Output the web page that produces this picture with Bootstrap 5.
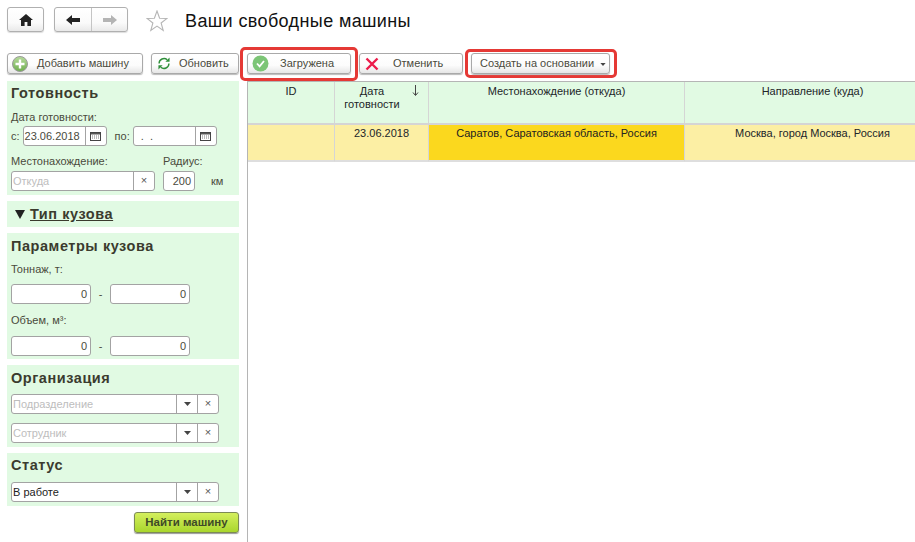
<!DOCTYPE html>
<html lang="ru"><head><meta charset="utf-8"><title>Ваши свободные машины</title>
<link href="https://cdn.jsdelivr.net/npm/bootstrap@5.3.0/dist/css/bootstrap.min.css" rel="stylesheet">
<style>
html,body{height:542px;overflow:hidden;background:#fff}
body{font-family:"Liberation Sans",Arial,sans-serif;font-size:11px;line-height:13px;color:#4a4a3c}
.top{height:46px;padding:7px 0 0 7px}
.nav-b{height:25px;border:1px solid #b0b0b0;border-radius:3px;background:linear-gradient(#fff,#fafafa 65%,#e9e9e9);box-shadow:0 1px 1px #ddd}
.home{width:37px}
.hist{width:74px;margin-left:10px}
.hist>div{width:50%}
.hist>div+div{border-left:1px solid #c4c4c4}
.star{margin-left:18px;margin-top:3px}
h1.ttl{font-size:18px;line-height:22px;font-weight:400;color:#111;margin:3px 0 0 17px;letter-spacing:.38px}
.tb{height:35px;padding-left:7px;align-items:center}
.b1c{height:21px;border:1px solid #a9a9a9;border-radius:3px;background:linear-gradient(#fff,#fcfcfc 60%,#e6e6e6);box-shadow:0 1px 1px #bbb;color:#4a4a3c;white-space:nowrap}
.redbox{border:3px solid #e53935;border-radius:5px;display:flex}
.rb1{margin-left:1px;padding:3.5px 4px}
.rb2{margin-left:2px;padding:1px 4px 1px 3px}
.main{height:461px}
.side{width:232px;margin-left:7px}
.pn{background:#e1fae3;padding:4px 4px 0 4px;margin-bottom:6px}
.pn h6{font-size:14.5px;line-height:16px;font-weight:700;color:#3b3b2e;margin:0;letter-spacing:.55px}
.fld{height:20px;border:1px solid #a3a3a3;border-radius:3px;background:#fff;color:#4a4a3c;overflow:hidden}
.fld .v{flex:1;padding:0 1px;line-height:18px;white-space:nowrap}
.fld .s{border-left:1px solid #a3a3a3;width:21px;flex:none;text-align:center;line-height:17px;color:#555}
.ph{color:#bdbdbd}
.num{text-align:right;padding-right:3px!important;color:#4a4a3c}
.lbl{white-space:nowrap}
.nf{width:80px}
.find{margin-left:127px;width:105px;height:21px;border:1px solid #7c8a55;border-radius:3px;background:linear-gradient(#d4ef5e,#a9d62d);box-shadow:0 1px 1px #999;font-weight:700;color:#3f4a28;font-size:11.5px;line-height:19px}
.gridw{margin-left:8px;flex:1;min-width:0;border-left:1px solid #b5b5b5;height:461px;overflow:hidden}
table.g{table-layout:fixed;width:693px;margin:0;border-collapse:separate;border-spacing:0;border-top:1px solid #b5b5b5}
table.g th,table.g td{padding:3px 4px 0;font-weight:400;text-align:center;vertical-align:top;border-right:1px solid #d5d5d5}
table.g th{background:#e1fae3;height:43px;border-bottom:2px solid #d5d5d5}
table.g td{background:#fcefa4;height:37px;border-bottom:2px solid #dedede;padding-top:2px}
table.g td.hl{background:#fbd81e;color:#222}
.sort{right:9px;top:3px}
</style></head><body>
<svg width="0" height="0" class="position-absolute"><defs>
<symbol id="cal" viewBox="0 0 11 9"><rect x=".5" y=".5" width="10" height="8" fill="#fff" stroke="#444"/><path d="M1 1h9v1.500H1z" fill="#555"/><path d="M2 4h1M4 4h1M6 4h1M8 4h1M2 6h1M4 6h1M6 6h1M8 6h1" stroke="#777"/></symbol>
<symbol id="dn" viewBox="0 0 7 4"><path d="M0 0h7L3.500 4z" fill="#444"/></symbol>
</defs></svg>
<div class="top d-flex">
  <div class="nav-b home d-flex align-items-center justify-content-center">
    <svg width="14" height="12" viewBox="0 0 14 12"><path d="M7 0 0 6h2v6h3.600V8h2.800v4H12V6h2z" fill="#222"/></svg>
  </div>
  <div class="nav-b hist d-flex">
    <div class="d-flex align-items-center justify-content-center"><svg width="14" height="10" viewBox="0 0 14 10"><path d="M6 0 0 5l6 5V7h8V3H6z" fill="#222"/></svg></div>
    <div class="d-flex align-items-center justify-content-center"><svg width="14" height="10" viewBox="0 0 14 10"><path d="M8 0l6 5-6 5V7H0V3h8z" fill="#b4b4b4"/></svg></div>
  </div>
  <svg class="star" width="22" height="22" viewBox="0 0 22 22"><path d="M11 1l2.600 7.200 7.400.2-5.900 4.600 2.100 7.400L11 16.100l-6.200 4.300 2.100-7.400L1 8.400l7.400-.2z" fill="#fff" stroke="#b5b5b5" stroke-width="1.100"/></svg>
  <h1 class="ttl">Ваши свободные машины</h1>
</div>
<div class="tb d-flex">
  <div class="b1c d-flex align-items-center" style="width:136px">
    <svg style="margin-left:4px" width="16" height="16" viewBox="0 0 16 16"><defs><linearGradient id="gp" x1="0" y1="0" x2="0" y2="1"><stop offset="0" stop-color="#b7dc9c"/><stop offset="1" stop-color="#6fae4f"/></linearGradient></defs><circle cx="8" cy="8" r="7.500" fill="url(#gp)" stroke="#9a9a9a"/><path d="M6.800 3.500h2.400v3.300h3.300v2.400H9.200v3.300H6.800V9.200H3.500V6.800h3.300z" fill="#fff"/></svg>
    <span style="margin-left:9px">Добавить машину</span>
  </div>
  <div class="b1c d-flex align-items-center" style="width:88px;margin-left:8px">
    <svg style="margin-left:5px" width="14" height="13" viewBox="0 0 15 14"><path d="M2.200 7A5.300 5.300 0 0 1 11 3" fill="none" stroke="#2f8f3a" stroke-width="1.500"/><path d="M9 5h4.500V.5z" fill="#2f8f3a"/><path d="M12.800 7A5.300 5.300 0 0 1 4 11" fill="none" stroke="#2f8f3a" stroke-width="1.500"/><path d="M6 9H1.500v4.500z" fill="#2f8f3a"/></svg>
    <span style="margin-left:8px">Обновить</span>
  </div>
  <div class="redbox rb1">
    <div class="b1c d-flex align-items-center" style="width:104px">
      <svg style="margin-left:4px" width="17" height="17" viewBox="0 0 17 17"><circle cx="8.500" cy="8.500" r="8" fill="#7cc576"/><path d="M5 8.500l2.600 2.800L12 6" fill="none" stroke="#fff" stroke-width="1.800"/></svg>
      <span style="margin-left:11px">Загружена</span>
    </div>
  </div>
  <div class="b1c d-flex align-items-center" style="width:104px;margin-left:1px">
    <svg style="margin-left:5px" width="14" height="14" viewBox="0 0 14 14"><path d="M1.500 1.500l11 11M12.500 1.500l-11 11" stroke="#ec1c4b" stroke-width="2.400"/></svg>
    <span style="margin-left:14px">Отменить</span>
  </div>
  <div class="redbox rb2">
    <div class="b1c d-flex align-items-center" style="width:139px">
      <span style="margin-left:8px">Создать на основании</span>
      <svg style="margin-left:6px;margin-top:2px" width="6" height="3"><use href="#dn"/></svg>
    </div>
  </div>
</div>
<div class="main d-flex">
  <div class="side">
    <div class="pn" style="height:114px">
      <h6>Готовность</h6>
      <div class="lbl" style="margin-top:10px">Дата готовности:</div>
      <div class="d-flex align-items-center" style="margin-top:2px">
        <span>с:</span>
        <div class="fld d-flex" style="width:84px;margin-left:3px"><div class="v">23.06.2018</div><div class="s d-flex align-items-center justify-content-center"><svg width="11" height="9"><use href="#cal"/></svg></div></div>
        <span style="margin-left:8px">по:</span>
        <div class="fld d-flex" style="width:84px;margin-left:3px"><div class="v">&nbsp;&nbsp;.&nbsp;&nbsp;.</div><div class="s d-flex align-items-center justify-content-center"><svg width="11" height="9"><use href="#cal"/></svg></div></div>
      </div>
      <div class="d-flex lbl" style="margin-top:9px"><span style="width:152px">Местонахождение:</span><span>Радиус:</span></div>
      <div class="d-flex align-items-center" style="margin-top:3px">
        <div class="fld d-flex" style="width:144px"><div class="v ph">Откуда</div><div class="s">×</div></div>
        <div class="fld" style="width:32px;margin-left:8px"><div class="v num">200</div></div>
        <span style="margin-left:16px">км</span>
      </div>
    </div>
    <div class="pn d-flex align-items-center" style="height:26px;padding-top:0">
      <svg style="margin-left:4px" width="10" height="9" viewBox="0 0 10 9"><path d="M0 0h10L5 9z" fill="#222"/></svg>
      <h6 class="text-decoration-underline" style="margin-left:5px">Тип кузова</h6>
    </div>
    <div class="pn" style="height:126px;padding-top:5px">
      <h6>Параметры кузова</h6>
      <div class="lbl" style="margin-top:9px">Тоннаж, т:</div>
      <div class="d-flex align-items-center" style="margin-top:8px"><div class="fld nf"><div class="v num">0</div></div><span style="width:19px;text-align:center">-</span><div class="fld nf"><div class="v num">0</div></div></div>
      <div class="lbl" style="margin-top:10px">Объем, м³:</div>
      <div class="d-flex align-items-center" style="margin-top:9px"><div class="fld nf"><div class="v num">0</div></div><span style="width:19px;text-align:center">-</span><div class="fld nf"><div class="v num">0</div></div></div>
    </div>
    <div class="pn" style="height:82px;padding-top:5px">
      <h6>Организация</h6>
      <div class="fld d-flex" style="width:208px;margin-top:8px"><div class="v ph">Подразделение</div><div class="s"><svg width="7" height="4"><use href="#dn"/></svg></div><div class="s">×</div></div>
      <div class="fld d-flex" style="width:208px;margin-top:9px"><div class="v ph">Сотрудник</div><div class="s"><svg width="7" height="4"><use href="#dn"/></svg></div><div class="s">×</div></div>
    </div>
    <div class="pn" style="height:53px">
      <h6>Статус</h6>
      <div class="fld d-flex" style="width:208px;margin-top:9px"><div class="v" style="color:#222">В работе</div><div class="s"><svg width="7" height="4"><use href="#dn"/></svg></div><div class="s">×</div></div>
    </div>
    <button type="button" class="btn find p-0 d-block">Найти машину</button>
  </div>
  <div class="gridw">
    <table class="table g">
      <colgroup><col style="width:87px"><col style="width:94px"><col style="width:256px"><col style="width:256px"></colgroup>
      <thead><tr><th>ID</th><th class="position-relative"><div style="width:58px;margin-left:4px">Дата готовности</div><svg class="sort position-absolute" width="7" height="11" viewBox="0 0 7 11"><path d="M3.500 0v10M1 7.500l2.500 3 2.500-3" fill="none" stroke="#444"/></svg></th><th>Местонахождение (откуда)</th><th>Направление (куда)</th></tr></thead>
      <tbody><tr><td></td><td>23.06.2018</td><td class="hl">Саратов, Саратовская область, Россия</td><td>Москва, город Москва, Россия</td></tr></tbody>
    </table>
  </div>
</div>
</body></html>
